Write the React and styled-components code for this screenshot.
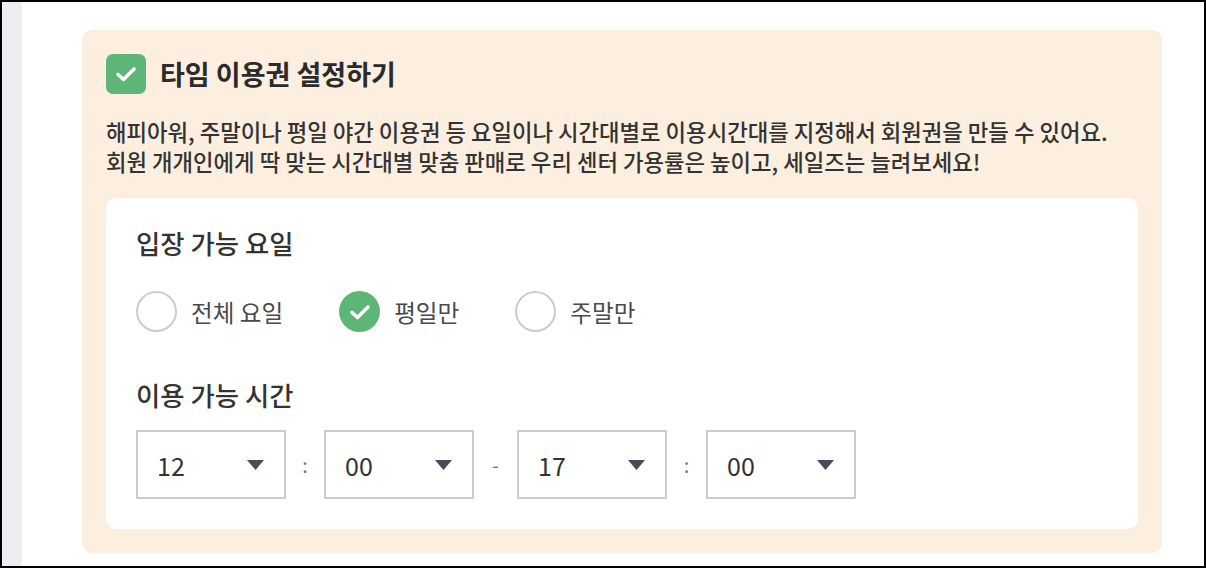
import React from 'react';
import styled, { createGlobalStyle } from "styled-components";

const GlobalStyle = createGlobalStyle`
  html, body {
    margin: 0;
    padding: 0;
    background: #fff;
  }
  body {
    font-family: "Noto Sans CJK KR", "Noto Sans", sans-serif;
    color: #333;
  }
  * {
    box-sizing: border-box;
  }
`;

const Frame = styled.div`
  width: 1206px;
  height: 568px;
  border: 2px solid #000;
  display: flex;
  overflow: hidden;
`;

const Sidebar = styled.div`
  width: 20px;
  background-color: #eceef2;
`;

const Main = styled.div`
  flex: 1;
  background-color: #fff;
  padding: 28px 42px 0 60px;
`;

const Card = styled.section`
  background-color: #fcefdf;
  border-radius: 10px;
  padding: 24px;
`;

const Header = styled.div`
  display: flex;
  align-items: center;
  gap: 14px;
`;

const CheckBox = styled.span`
  width: 40px;
  height: 40px;
  border-radius: 7px;
  background-color: #5db677;
  display: flex;
  align-items: center;
  justify-content: center;
`;

const Title = styled.h2`
  margin: 0;
  font-size: 27px;
  font-weight: 700;
  color: #2b2b2e;
  line-height: 40px;
`;

const Desc = styled.p`
  margin: 22px 0 22px;
  font-size: 22.3px;
  font-weight: 500;
  line-height: 30px;
  color: #333;
`;

const Panel = styled.div`
  background-color: #fff;
  border-radius: 10px;
  padding: 28px 30px 30px;
`;

const Label = styled.h3`
  margin: 0;
  font-size: 26.4px;
  font-weight: 500;
  line-height: 34px;
  color: #333;
  margin-top: ${(p) => p.$top || 0}px;
`;

const RadioRow = styled.div`
  display: flex;
  align-items: center;
  gap: 56px;
  margin-top: 31px;
`;

const RadioItem = styled.label`
  display: flex;
  align-items: center;
  gap: 14px;
  font-size: 23.6px;
  color: #4a4a4a;
  cursor: pointer;
`;

const Circle = styled.span`
  width: 41px;
  height: 41px;
  border-radius: 50%;
  border: ${(p) => (p.$checked ? "none" : "2px solid #cccccc")};
  background-color: ${(p) => (p.$checked ? "#5db677" : "#fff")};
  display: flex;
  align-items: center;
  justify-content: center;
`;

const TimeRow = styled.div`
  display: flex;
  align-items: center;
  margin-top: 18px;
`;

const Select = styled.div`
  width: 150px;
  height: 69px;
  border: 2px solid #cccccc;
  display: flex;
  align-items: center;
  justify-content: space-between;
  padding: 0 20px 0 19px;
  font-size: 25px;
  color: #333;
`;

const Sep = styled.span`
  width: ${(p) => p.$w}px;
  text-align: center;
  font-size: 20px;
  color: #777;
`;

function Check({ size = 24 }) {
  return (
    <svg width={size} height={size} viewBox="0 0 24 24" fill="none">
      <polyline
        points="4,12.5 9.5,17.5 20,7"
        stroke="#fff"
        strokeWidth="3.6"
        strokeLinecap="round"
        strokeLinejoin="round"
      />
    </svg>
  );
}

function Arrow() {
  return (
    <svg width="17" height="10" viewBox="0 0 17 10">
      <polygon points="0,0 17,0 8.5,10" fill="#484b59" />
    </svg>
  );
}

const days = [
  { label: "전체 요일", checked: false },
  { label: "평일만", checked: true },
  { label: "주말만", checked: false },
];

function App() {
  return (
    <>
      <GlobalStyle />
      <Frame>
        <Sidebar />
        <Main>
          <Card>
            <Header>
              <CheckBox>
                <Check />
              </CheckBox>
              <Title>타임 이용권 설정하기</Title>
            </Header>
            <Desc>
              해피아워, 주말이나 평일 야간 이용권 등 요일이나 시간대별로 이용시간대를 지정해서 회원권을 만들 수 있어요.
              <br />
              회원 개개인에게 딱 맞는 시간대별 맞춤 판매로 우리 센터 가용률은 높이고, 세일즈는 늘려보세요!
            </Desc>
            <Panel>
              <Label>입장 가능 요일</Label>
              <RadioRow>
                {days.map((d) => (
                  <RadioItem key={d.label}>
                    <Circle $checked={d.checked}>{d.checked && <Check />}</Circle>
                    {d.label}
                  </RadioItem>
                ))}
              </RadioRow>
              <Label $top={46}>이용 가능 시간</Label>
              <TimeRow>
                <Select>12<Arrow /></Select>
                <Sep $w={38}>:</Sep>
                <Select>00<Arrow /></Select>
                <Sep $w={43}>-</Sep>
                <Select>17<Arrow /></Select>
                <Sep $w={39}>:</Sep>
                <Select>00<Arrow /></Select>
              </TimeRow>
            </Panel>
          </Card>
        </Main>
      </Frame>
    </>
  );
}

export default App;
